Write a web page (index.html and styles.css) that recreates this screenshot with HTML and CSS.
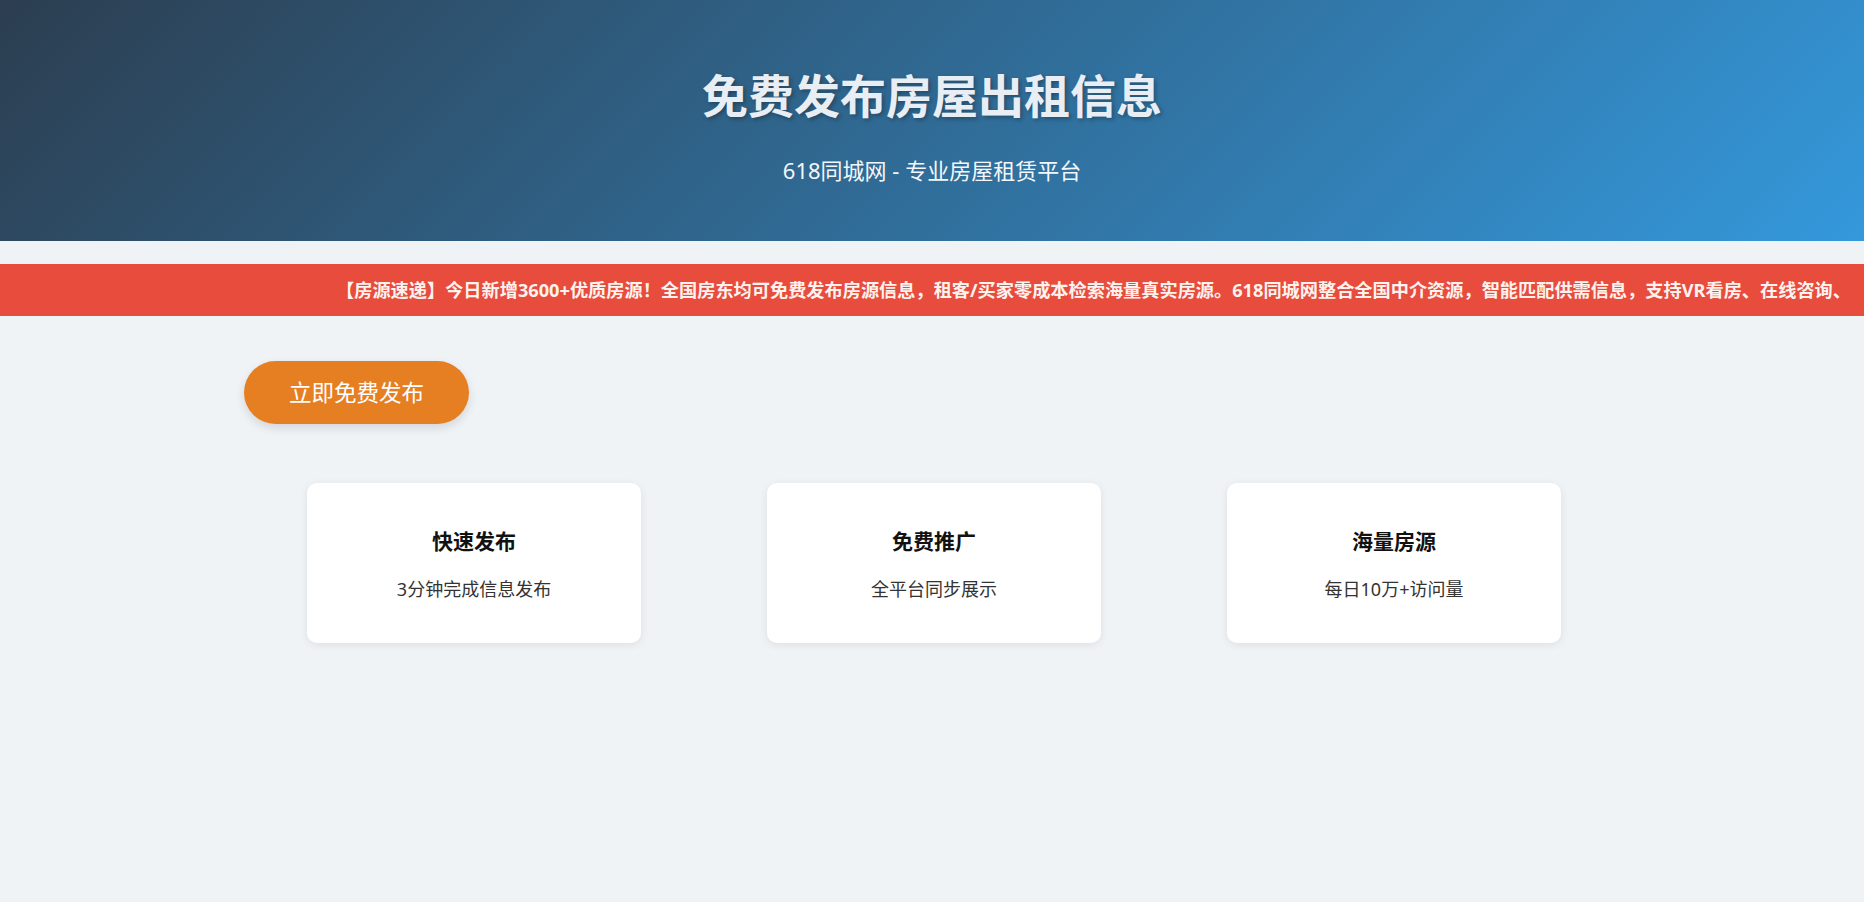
FILE: index.html
```html
<!DOCTYPE html>
<html lang="zh-CN">
    <head>
        <meta charset="utf-8">
        <title>免费发布房屋出租信息 - 618同城网</title>
        <link rel="stylesheet" href="styles.css">
    </head>
    <body>
        <header class="header">
            <h1 class="header-title">免费发布房屋出租信息</h1>
            <p class="header-subtitle">618同城网 - 专业房屋租赁平台</p>
        </header>

        <div class="news-bar">
            <div class="news-text">【房源速递】今日新增3600+优质房源！全国房东均可免费发布房源信息，租客/买家零成本检索海量真实房源。618同城网整合全国中介资源，智能匹配供需信息，支持VR看房、在线咨询、</div>
        </div>

        <div class="container">
            <a class="publish-button" href="#">立即免费发布</a>

            <div class="features">
                <div class="feature-card">
                    <h3 class="feature-title">快速发布</h3>
                    <p class="feature-text">3分钟完成信息发布</p>
                </div>
                <div class="feature-card">
                    <h3 class="feature-title">免费推广</h3>
                    <p class="feature-text">全平台同步展示</p>
                </div>
                <div class="feature-card">
                    <h3 class="feature-title">海量房源</h3>
                    <p class="feature-text">每日10万+访问量</p>
                </div>
            </div>
        </div>
    </body>
</html>
```

FILE: styles.css
```css
body{
    margin: 0;
    background: #f0f3f6;
    font-family: "Noto Sans", "Noto Sans CJK SC", sans-serif;
    color: #333;
}

.header{
    background: linear-gradient(135deg, #2c3e50, #3498db);
    color: #fff;
    text-align: center;
    padding: 66px 20px 54px;
}

.header-title{
    margin: 0 0 28px;
    font-size: 46px;
    line-height: 59px;
    font-weight: bold;
    color: #e8eef4;
    text-shadow: 2px 2px 4px rgba(0, 0, 0, 0.3);
}

.header-subtitle{
    margin: 0;
    font-size: 22px;
    line-height: 34px;
    opacity: 0.95;
}

.news-bar{
    margin-top: 23px;
    background: #e74c3c;
    height: 52px;
    overflow: hidden;
}

.news-text{
    padding-left: 336px;
    white-space: nowrap;
    color: #fdf2ee;
    font-size: 18.2px;
    font-weight: bold;
    line-height: 52px;
}

.container{
    max-width: 1376px;
    margin: 0 auto;
    padding: 45px 0 60px;
}

.publish-button{
    display: inline-block;
    background: #e67e22;
    color: #fff;
    text-decoration: none;
    font-size: 22.5px;
    line-height: 33px;
    padding: 15px 45px;
    border-radius: 40px;
    box-shadow: 0 4px 10px rgba(0, 0, 0, 0.12);
}

.features{
    display: grid;
    grid-template-columns: repeat(3, 334px);
    justify-content: center;
    column-gap: 126px;
    margin-top: 59px;
    padding-left: 4px;
}

.feature-card{
    background: #fff;
    border-radius: 10px;
    box-shadow: 0 2px 8px rgba(0, 0, 0, 0.08);
    height: 160px;
    display: flex;
    flex-direction: column;
    justify-content: center;
    align-items: center;
    gap: 22px;
    padding-top: 4px;
    box-sizing: border-box;
}

.feature-title{
    margin: 0;
    font-size: 21px;
    line-height: 25px;
    font-weight: bold;
    color: #111;
}

.feature-text{
    margin: 0;
    font-size: 18px;
    line-height: 26px;
    color: #333;
}
```
